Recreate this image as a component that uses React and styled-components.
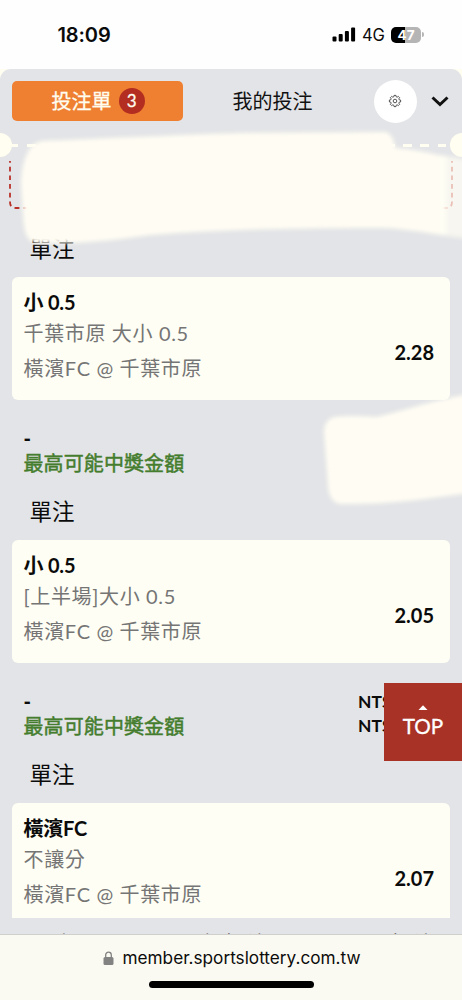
import React from 'react';
import styled, { createGlobalStyle } from 'styled-components';

const Global = createGlobalStyle`
  * { box-sizing: border-box; }
  body { margin: 0; background: #fffef2; }
`;

const Screen = styled.div`
  position: relative;
  width: 462px;
  height: 1000px;
  overflow: hidden;
  display: flex;
  flex-direction: column;
  background: #fffef0;
  color: #0b0b0b;
  font-family: Lato, 'Noto Sans CJK TC', sans-serif;
`;

const StatusBar = styled.header`
  height: 69px;
  flex: none;
  display: flex;
  align-items: center;
  justify-content: space-between;
  padding: 0 41px 0 57.5px;
  background: #fefefe;
  font-family: Inter, sans-serif;
`;
const Clock = styled.div`
  font-size: 20px;
  font-weight: 600;
  letter-spacing: -0.1px;
`;
const Indicators = styled.div`
  display: flex;
  align-items: center;
  font-size: 16.6px;
  gap: 6px;
`;
const Battery = styled.div`
  position: relative;
  width: 30px;
  height: 16px;
  border-radius: 5px;
  background: linear-gradient(90deg, #000 47%, #b5b5b5 47%);
  color: #fff;
  font-size: 13.5px;
  font-weight: 700;
  line-height: 16px;
  text-align: center;
  &::after {
    content: '';
    position: absolute;
    right: -3px;
    top: 5.5px;
    width: 2px;
    height: 5px;
    border-radius: 0 2px 2px 0;
    background: #b5b5b5;
  }
`;

const Slip = styled.main`
  position: relative;
  flex: 1;
  min-height: 0;
  overflow: hidden;
  background: #e3e4e7;
  border-radius: 11px 11px 0 0;
  display: flex;
  flex-direction: column;
`;
const TabBar = styled.nav`
  height: 64px;
  flex: none;
  display: flex;
  align-items: center;
  padding: 0 12px 0 11.6px;
`;
const Tab = styled.div`
  width: ${(p) => p.$width}px;
  height: 40px;
  border-radius: 5px;
  display: flex;
  align-items: center;
  justify-content: center;
  gap: 7px;
  padding-bottom: 1px;
  font-size: 20px;
  -webkit-text-stroke: ${(p) => (p.$active ? '0.3px' : '0')};
  color: ${(p) => (p.$active ? '#fffdf0' : '#111')};
  background: ${(p) => (p.$active ? '#ef8031' : 'transparent')};
`;
const Count = styled.span`
  width: 26px;
  height: 26px;
  margin-top: 1px;
  margin-right: -2px;
  border-radius: 50%;
  background: #b32d20;
  font-size: 17px;
  line-height: 26px;
  text-align: center;
`;
const SettingsButton = styled.div`
  width: 43px;
  height: 43px;
  margin: 0 14px 0 11px;
  border-radius: 50%;
  background: #fff;
  display: flex;
  align-items: center;
  justify-content: center;
`;

const Voucher = styled.section`
  height: 89.5px;
  flex: none;
  display: flex;
  flex-direction: column;
`;
const Perforation = styled.div`
  height: 24px;
  display: flex;
  align-items: center;
  justify-content: space-between;
`;
const Notch = styled.i`
  width: 12px;
  height: 24px;
  background: #fffef0;
  border-radius: ${(p) => (p.$right ? '12px 0 0 12px' : '0 12px 12px 0')};
`;
const Dashes = styled.i`
  flex: 1;
  height: 3px;
  margin-top: 1px;
  background: repeating-linear-gradient(90deg, #fffef0 0 6.5px, transparent 6.5px 15.2px, #fffef0 15.2px 17.1px);
`;
const VoucherFrame = styled.svg`
  display: block;
  margin: 4px 0 0 9px;
`;

const Bet = styled.article`
  flex: none;
  height: 263px;
`;
const BetType = styled.h2`
  height: 54px;
  margin: 0;
  padding-left: 29.5px;
  font-size: 22.5px;
  font-weight: 400;
  line-height: 51px;
`;
const BetCard = styled.div`
  height: ${(p) => (p.$cut ? 115 : 123)}px;
  margin: 0 12px 0 11.5px;
  padding: 10.5px 16px 0 12px;
  display: flex;
  justify-content: space-between;
  border-radius: ${(p) => (p.$cut ? '6px 6px 0 0' : '6px')};
  background: #fefef4;
`;
const Selection = styled.div`
  font-size: 20px;
  font-weight: 700;
  line-height: 30px;
  letter-spacing: -0.2px;
`;
const Detail = styled.div`
  height: ${(p) => p.$height}px;
  font-size: 20px;
  line-height: ${(p) => p.$height}px;
  letter-spacing: 0.65px;
  color: #757575;
`;
const Odds = styled.div`
  padding-top: 50px;
  font-size: 20px;
  font-weight: 700;
  line-height: 30px;
`;
const Totals = styled.div`
  height: 86px;
  padding: 27px 36px 0 23.5px;
  display: flex;
  justify-content: space-between;
  font-size: 17.4px;
  font-weight: 700;
  line-height: 24px;
`;
const Stake = styled.div`
  height: 24px;
  font-size: 20px;
  font-weight: 900;
  line-height: 22px;
`;
const Payout = styled.div`
  font-size: 20px;
  font-weight: 400;
  line-height: 25px;
  letter-spacing: 0.1px;
  color: #457d2e;
  -webkit-text-stroke: 0.5px #457d2e;
`;
const Amounts = styled.div`
  width: 68px;
`;

const SlipActions = styled.footer`
  position: absolute;
  left: 0;
  right: 0;
  bottom: 0;
  height: 16px;
  overflow: hidden;
  display: flex;
  justify-content: space-between;
  padding: 12px 25px 0 35px;
  font-size: 20px;
  line-height: 26px;
  letter-spacing: 3px;
  color: #555;
  background: #e3e4e7;
`;

const Smear = styled.svg`
  position: absolute;
  inset: 0;
  pointer-events: none;
`;

const TopButton = styled.div`
  position: absolute;
  right: 0;
  top: 683px;
  width: 78px;
  height: 78px;
  padding-top: 22px;
  display: flex;
  flex-direction: column;
  align-items: center;
  background: #a83226;
  color: #fff;
  font-size: 20.7px;
  line-height: 32px;
  -webkit-text-stroke: 0.3px;
`;

const BrowserBar = styled.div`
  height: 66px;
  flex: none;
  display: flex;
  flex-direction: column;
  align-items: center;
  border-top: 1px solid #cfcfcc;
  background: #fbfaf2;
`;
const Address = styled.div`
  height: 46px;
  display: flex;
  align-items: center;
  gap: 8px;
  padding: 0 0 1px 2px;
  font-family: Inter, sans-serif;
  font-size: 17.2px;
`;
const HomeIndicator = styled.div`
  width: 165px;
  height: 7px;
  border-radius: 4px;
  background: #000;
`;

const bets = [
  { pick: '小 0.5', market: '千葉市原 大小 0.5', odds: '2.28' },
  { pick: '小 0.5', market: '[上半場]大小 0.5', odds: '2.05', amounts: true },
  { pick: '橫濱FC', market: '不讓分', odds: '2.07', cut: true },
];

function BetItem({ bet }) {
  return (
    <Bet>
      <BetType>單注</BetType>
      <BetCard $cut={bet.cut}>
        <div>
          <Selection>{bet.pick}</Selection>
          <Detail $height={32}>{bet.market}</Detail>
          <Detail $height={38}>橫濱FC @ 千葉市原</Detail>
        </div>
        <Odds>{bet.odds}</Odds>
      </BetCard>
      {!bet.cut && (
        <Totals>
          <div>
            <Stake>-</Stake>
            <Payout>最高可能中獎金額</Payout>
          </div>
          {bet.amounts && (
            <Amounts>
              <div>NT$</div>
              <div>NT$</div>
            </Amounts>
          )}
        </Totals>
      )}
    </Bet>
  );
}

const gearPoints = Array.from({ length: 8 }, (_, i) => {
  const at = (r, d) => {
    const a = ((i * 45 + d) * Math.PI) / 180;
    return `${(7 + r * Math.cos(a)).toFixed(2)},${(7 + r * Math.sin(a)).toFixed(2)}`;
  };
  return [at(4.4, -15), at(5.7, -10), at(5.7, 10), at(4.4, 15)].join(' ');
}).join(' ');

export default function App() {
  return (
    <Screen>
      <Global />
      <StatusBar>
        <Clock>18:09</Clock>
        <Indicators>
          <svg width="24" height="15" viewBox="0 0 24 15">
            <rect x="0.5" y="9.5" width="4" height="5" rx="1" />
            <rect x="6.7" y="7" width="4" height="7.5" rx="1" />
            <rect x="12.9" y="4" width="4" height="10.5" rx="1" />
            <rect x="19.1" y="0.5" width="4" height="14" rx="1" />
          </svg>
          <span>4G</span>
          <Battery>47</Battery>
        </Indicators>
      </StatusBar>
      <Slip>
        <TabBar>
          <Tab $active $width={171}>
            投注單<Count>3</Count>
          </Tab>
          <Tab $width={180}>我的投注</Tab>
          <SettingsButton>
            <svg width="14" height="14" viewBox="0 0 14 14" fill="none" stroke="#444" strokeWidth="0.9" strokeLinejoin="round">
              <polygon points={gearPoints} />
              <circle cx="7" cy="7" r="1.8" />
            </svg>
          </SettingsButton>
          <svg width="18" height="12" viewBox="0 0 18 12" fill="none" stroke="#111" strokeWidth="3">
            <path d="M1.5 2.5 L9 9.5 L16.5 2.5" />
          </svg>
        </TabBar>
        <Voucher>
          <Perforation>
            <Notch />
            <Dashes />
            <Notch $right />
          </Perforation>
          <VoucherFrame width="445" height="50" fill="none" stroke="#b93029" strokeWidth="1.8" strokeDasharray="4.7 4" strokeDashoffset="3">
            <path d="M1 0 V41 Q1 47 7 47 H222" />
            <path d="M443 0 V41 Q443 47 437 47 H222" />
          </VoucherFrame>
        </Voucher>
        {bets.map((bet) => (
          <BetItem key={bet.odds} bet={bet} />
        ))}
        <SlipActions>
          <span>全部</span>
          <span>全部投注單</span>
          <span>投注</span>
        </SlipActions>
      </Slip>
      <BrowserBar>
        <Address>
          <svg width="11" height="14" viewBox="0 0 11 14">
            <rect x="0.5" y="6" width="10" height="8" rx="1.5" fill="#828282" />
            <path d="M2.7 6.5 V4 a2.8 2.8 0 0 1 5.6 0 V6.5" fill="none" stroke="#828282" strokeWidth="1.3" />
          </svg>
          member.sportslottery.com.tw
        </Address>
        <HomeIndicator />
      </BrowserBar>
      <Smear width="462" height="1000" viewBox="0 0 462 1000">
        <defs>
          <filter id="soft" x="-10%" y="-20%" width="120%" height="140%">
            <feGaussianBlur stdDeviation="2" />
          </filter>
        </defs>
        <g filter="url(#soft)" fill="#fffdf3">
          <path d="M42 141 C90 139 180 135 240 133 L385 132 Q393 133 395 148 Q420 150 446 157 L446 235 C430 234 410 229 385 228 C300 228 220 229 150 235 C110 241 75 244 38 243 C25 242 24 230 23 213 L21 184 C22 163 27 144 42 141 Z" />
          <path d="M440 155 L470 160 V239 L440 235 Z" opacity="0.7" />
          <path d="M334 417 Q352 415 376 417 C400 412 425 402 470 394 V493 C425 499 385 505 340 504 Q329 502 328 485 L324 432 Q324 420 334 417 Z" />
        </g>
      </Smear>
      <TopButton>
        <svg width="10" height="5" viewBox="0 0 10 5">
          <path d="M0.5 5 L5 0.3 L9.5 5 Z" fill="#fff" />
        </svg>
        TOP
      </TopButton>
    </Screen>
  );
}
